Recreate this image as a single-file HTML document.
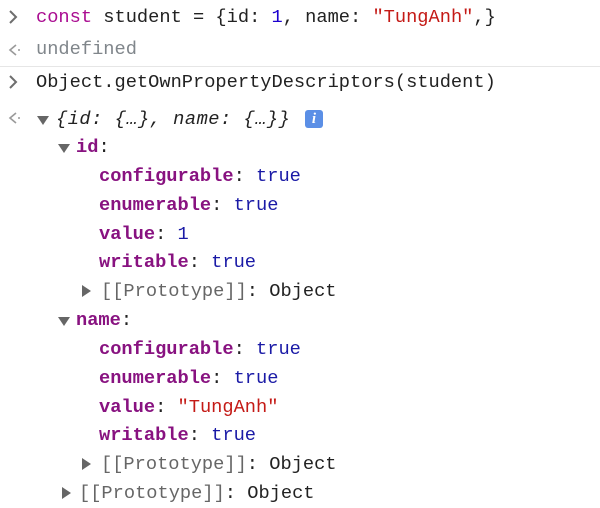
<!DOCTYPE html>
<html><head><style>
body{margin:0;width:600px;height:508px;background:#fff;overflow:hidden;font-family:"Liberation Mono",monospace;font-size:18.7px;color:#222;position:relative}
.l{position:absolute;height:29px;line-height:29px;white-space:pre}
.p{color:#881280;font-weight:bold}
.b{color:#1a1aa6}
.n{color:#1c00cf}
.s{color:#c41a16}
.k{color:#aa0d91}
.g{color:#80868b}
.pr{color:#666}
.i{font-style:italic;letter-spacing:0.5px}
.tri{position:absolute;width:0;height:0}
.down{border-left:6px solid transparent;border-right:6px solid transparent;border-top:9px solid #666}
.right{border-top:6px solid transparent;border-bottom:6px solid transparent;border-left:9px solid #666}
</style></head><body>
<svg style="position:absolute;left:0;top:0" width="40" height="140">
<path d="M10 11 L16 17 L10 23" stroke="#6e6e6e" stroke-width="2" fill="none"/>
<path d="M16 45 L10 50 L16 55" stroke="#9a9a9a" stroke-width="1.6" fill="none"/><circle cx="19" cy="50" r="1" fill="#9a9a9a"/>
<path d="M10 76 L16 82 L10 88" stroke="#6e6e6e" stroke-width="2" fill="none"/>
<path d="M16 113 L10 118 L16 123" stroke="#9a9a9a" stroke-width="1.6" fill="none"/><circle cx="19" cy="118" r="1" fill="#9a9a9a"/>
</svg>
<div style="position:absolute;left:0;top:66px;width:600px;height:1px;background:#e6e6e6"></div>
<div class="l" style="left:36px;top:3px"><span class="k">const</span> student = {id: <span class="n">1</span>, name: <span class="s">"TungAnh"</span>,}</div>
<div class="l g" style="left:36px;top:35px">undefined</div>
<div class="l" style="left:36px;top:68px">Object.getOwnPropertyDescriptors(student)</div>
<div class="tri down" style="left:37px;top:116px"></div>
<div class="l i" style="left:56px;top:105px">{id: {…}, name: {…}}</div>
<div style="position:absolute;left:305px;top:110px;width:18px;height:18px;background:#5b8fe6;border-radius:3px;color:#fff;font-family:'Liberation Serif',serif;font-style:italic;font-weight:bold;font-size:15px;text-align:center;line-height:18px">i</div>
<div class="tri down" style="left:58px;top:144px"></div>
<div class="l" style="left:76px;top:133px"><span class="p">id</span>:</div>
<div class="l" style="left:99px;top:162px"><span class="p">configurable</span>: <span class="b">true</span></div>
<div class="l" style="left:99px;top:191px"><span class="p">enumerable</span>: <span class="b">true</span></div>
<div class="l" style="left:99px;top:220px"><span class="p">value</span>: <span class="b">1</span></div>
<div class="l" style="left:99px;top:248px"><span class="p">writable</span>: <span class="b">true</span></div>
<div class="tri right" style="left:82px;top:285px"></div>
<div class="l" style="left:101px;top:277px"><span class="pr">[[Prototype]]</span>: Object</div>
<div class="tri down" style="left:58px;top:317px"></div>
<div class="l" style="left:76px;top:306px"><span class="p">name</span>:</div>
<div class="l" style="left:99px;top:335px"><span class="p">configurable</span>: <span class="b">true</span></div>
<div class="l" style="left:99px;top:364px"><span class="p">enumerable</span>: <span class="b">true</span></div>
<div class="l" style="left:99px;top:393px"><span class="p">value</span>: <span class="s">"TungAnh"</span></div>
<div class="l" style="left:99px;top:421px"><span class="p">writable</span>: <span class="b">true</span></div>
<div class="tri right" style="left:82px;top:458px"></div>
<div class="l" style="left:101px;top:450px"><span class="pr">[[Prototype]]</span>: Object</div>
<div class="tri right" style="left:62px;top:487px"></div>
<div class="l" style="left:79px;top:479px"><span class="pr">[[Prototype]]</span>: Object</div>
</body></html>
